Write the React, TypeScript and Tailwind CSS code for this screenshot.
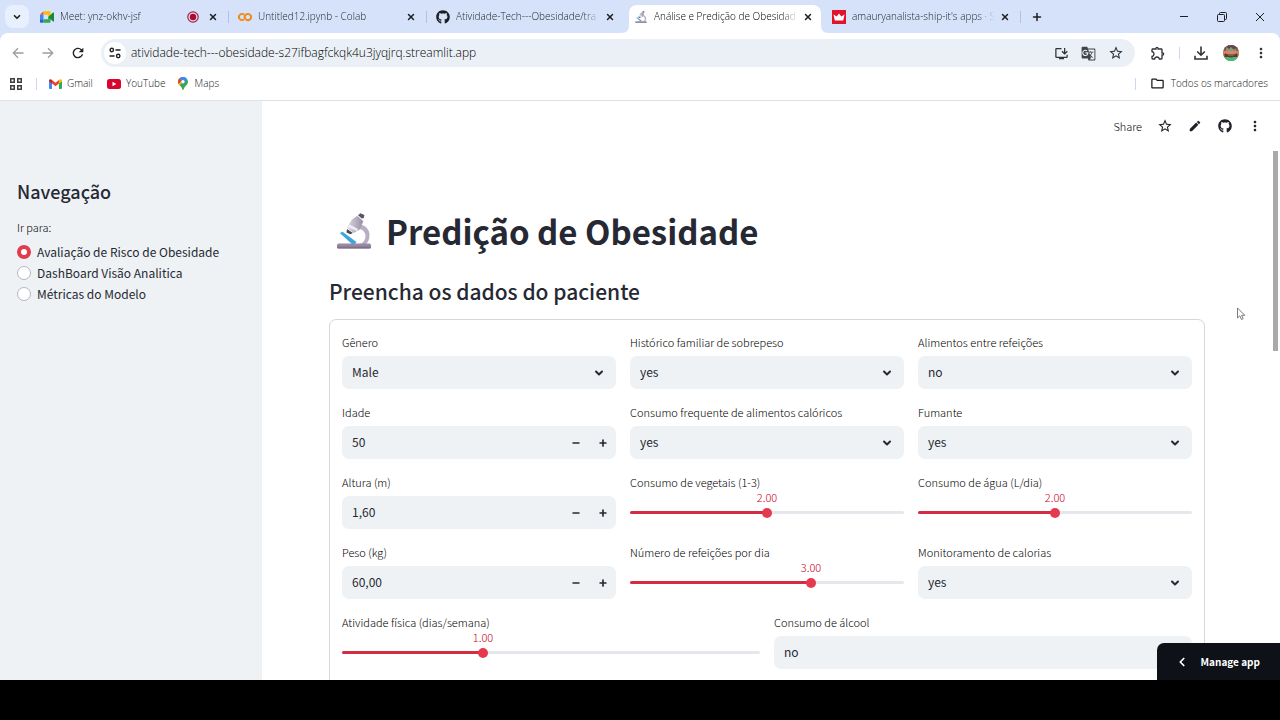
import { useState, type ReactNode } from "react";
import { ChevronDown, ChevronLeft, Minus, Plus, X } from "lucide-react";
import { FaGithub } from "react-icons/fa";
import { SiGooglecolab } from "react-icons/si";
import {
  MdEdit,
  MdGTranslate,
  MdMoreVert,
  MdOutlineExtension,
  MdOutlineFolder,
  MdOutlineInstallDesktop,
  MdRefresh,
  MdStarBorder,
} from "react-icons/md";

function MeetIcon() {
  return (
    <svg viewBox="0 0 24 20" className="h-3 w-3.5">
      <path d="M6 0v6H0z" fill="#ea4335" />
      <path d="M0 6h6v8H0z" fill="#4285f4" />
      <path d="M0 14h6v6H2a2 2 0 0 1-2-2z" fill="#1a67d6" />
      <path d="M6 0h10a2 2 0 0 1 2 2v8h-4V6H6z" fill="#fbbc04" />
      <path d="M6 14h8v-4h4v8a2 2 0 0 1-2 2H6z" fill="#34a853" />
      <path d="M14 10l8.400-7.600c.6-.5 1.600-.1 1.600.7v13.800c0 .8-1 1.200-1.600.7z" fill="#138a3e" />
    </svg>
  );
}

function MicroscopeIcon({ className }: { className: string }) {
  return (
    <svg viewBox="0 0 36 36" className={className}>
      <defs>
        <linearGradient id="tube" x1="0" x2="1">
          <stop offset="0" stopColor="#dcd8e4" />
          <stop offset="1" stopColor="#978fa3" />
        </linearGradient>
      </defs>
      <path d="M22 11c7.500 1 11.500 5 11.500 11 0 4.500-1.500 7.500-4 9.500h-6c4-1.800 6-4.500 6-8.800 0-4-3.500-7-9.500-7.700z" fill="#b6afc3" />
      <path d="M4 20.300l2.200-1.800 14.300 10.600-1.600 1.900h-3z" fill="#3fa5dc" />
      <path d="M16 6.500l5.300-3.800 6 5.500-3.500 8.300-6.300 3.600-6.500-5.300z" fill="url(#tube)" />
      <path d="M12.500 11l9.500 5-1.200 2-9.600-4z" fill="#efecf5" />
      <path d="M11 16l5.800 3.900-2.500 1.300-3.800-1.700z" fill="#4b4652" />
      <path d="M22 2.300l2.400-2 4 1.800-.6 2.800-2 .6z" fill="#5a5563" />
      <rect x="1" y="30.500" width="34" height="5" rx="1.800" fill="#998aa3" />
      <rect x="1" y="33.500" width="34" height="2" rx="1" fill="#7f718c" />
    </svg>
  );
}

function CrownIcon() {
  return (
    <svg viewBox="0 0 14 14" className="h-3.5 w-3.5">
      <path d="M0 0h14v14H0z" fill="#e0142c" />
      <path d="M1.500 4.500l3.200 2L7 3.500l2.300 3 3.200-2-1.300 6H2.800z" fill="#fff" />
    </svg>
  );
}

function RecordIcon() {
  return (
    <svg viewBox="0 0 12 12" className="h-3 w-3 shrink-0">
      <circle cx="6" cy="6" r="5.200" fill="none" stroke="#b3193b" strokeWidth="1.200" />
      <circle cx="6" cy="6" r="3.200" fill="#a50e2e" />
    </svg>
  );
}

function ArrowIcon({ className }: { className?: string }) {
  return (
    <svg viewBox="0 0 12 12" className={`h-3 w-3 ${className ?? ""}`} fill="none" stroke="#9a9da1" strokeWidth="1.300">
      <path d="M11.500 6H1.500M6 1.300L1.300 6 6 10.700" />
    </svg>
  );
}

function TuneIcon() {
  return (
    <svg viewBox="0 0 12 12" className="h-3 w-3" fill="none" stroke="#202124" strokeWidth="1.400">
      <circle cx="2.800" cy="3" r="1.700" />
      <circle cx="9.200" cy="9" r="1.700" />
      <path d="M6.500 3H11.500M.5 9h5" />
    </svg>
  );
}

function DownloadIcon() {
  return (
    <svg viewBox="0 0 14 14" className="h-3.5 w-3.5" fill="none" stroke="#303236" strokeWidth="1.600">
      <path d="M7 .5v8.500M3.200 5.500L7 9.200l3.800-3.700M1 9.800v3.200h12V9.800" />
    </svg>
  );
}

function AppsIcon() {
  return (
    <svg viewBox="0 0 12 12" className="h-3 w-3" fill="none" stroke="#3c4043" strokeWidth="1.500">
      <path d="M.75.75h3.500v3.500H.75zM7.750.75h3.500v3.500h-3.500zM.75 7.750h3.500v3.500H.75zM7.750 7.750h3.500v3.500h-3.500z" />
    </svg>
  );
}

function GmailIcon() {
  return (
    <svg viewBox="0 0 24 18" className="h-[10px] w-[13px]">
      <path d="M0 3v13.500A1.500 1.500 0 0 0 1.500 18H5.500V7.500z" fill="#4285f4" />
      <path d="M24 3v13.500a1.500 1.500 0 0 1-1.500 1.500h-4V7.500z" fill="#34a853" />
      <path d="M5.500 1.500v6.500L12 13l6.500-5V1.500L12 6.500z" fill="#ea4335" />
      <path d="M0 3.500C0 .5 3-.8 5.500 1.500V8L0 4z" fill="#c5221f" />
      <path d="M24 3.500C24 .5 21-.8 18.500 1.500V8L24 4z" fill="#fbbc04" />
    </svg>
  );
}

function YouTubeIcon() {
  return (
    <svg viewBox="0 0 14 10" className="h-[10px] w-3.5">
      <rect width="14" height="10" rx="2.500" fill="#d8062f" />
      <path d="M5.500 2.800v4.400L9.300 5z" fill="#fff" />
    </svg>
  );
}

function MapsIcon() {
  return (
    <svg viewBox="0 0 20 26" className="h-[13px] w-[10px]">
      <path d="M10 26c-1.500 0-1.500-3-3.500-6C4 16.500 0 14.500 0 9.500A10 10 0 0 1 10 0a10 10 0 0 1 10 9.500c0 5-4 7-6.500 10.500-2 3-2 6-3.500 6z" fill="#34a853" />
      <path d="M0 9.500C0 6.500 1.200 4 3 2.500L10 10 3 17C1.200 14.800 0 12.500 0 9.500z" fill="#fbbc04" />
      <path d="M3 2.500l5 4.500-6.500 7C.5 12.500 0 11 0 9.500 0 6.700 1.200 4 3 2.500z" fill="#ea4335" />
      <path d="M3 2.500A10 10 0 0 1 18.500 5L8 16.500l-1-8z" fill="#4285f4" />
      <circle cx="10" cy="9.500" r="3.300" fill="#fff" />
    </svg>
  );
}

function Avatar() {
  return (
    <svg viewBox="0 0 16 16" className="h-4 w-4">
      <defs>
        <clipPath id="round">
          <circle cx="8" cy="8" r="8" />
        </clipPath>
      </defs>
      <g clipPath="url(#round)">
        <path d="M0 0h16v16H0z" fill="#8a5a4c" />
        <path d="M0 0h16v4H0z" fill="#5b4a48" />
        <path d="M0 6h16v3H0z" fill="#d9835c" />
        <path d="M3 2l3 2 2-2 3 3 2-2v3H3z" fill="#8f957c" />
        <path d="M2 8l4 3h4l4-3v4H2z" fill="#6b3330" />
        <path d="M5 6h6l-1 3H6z" fill="#c98f6a" />
        <path d="M0 12h5l3 1 3-1h5v4H0z" fill="#3fc076" />
      </g>
    </svg>
  );
}

const tabs: { title: string; icon: ReactNode; active?: boolean; recording?: boolean }[] = [
  { title: "Meet: ynz-okhv-jsf", icon: <MeetIcon />, recording: true },
  { title: "Untitled12.ipynb - Colab", icon: <SiGooglecolab className="h-3.5 w-3.5 text-[#ee8a13]" /> },
  { title: "Atividade-Tech---Obesidade/tra", icon: <FaGithub className="h-3.5 w-3.5 text-[#1b1f24]" /> },
  { title: "Análise e Predição de Obesidad", icon: <MicroscopeIcon className="h-3 w-3.5" />, active: true },
  { title: "amauryanalista-ship-it's apps · S", icon: <CrownIcon /> },
];

function TabStrip() {
  return (
    <div className="flex h-[33px] bg-[#d5e2fa]">
      <button aria-label="Pesquisar guias" className="my-[5px] ml-[5px] mr-0.5 flex w-6 items-center justify-center rounded-lg bg-[#e9f0fd]">
        <ChevronDown className="h-2.5 w-2.5 text-[#1f1f1f]" strokeWidth={4} />
      </button>
      {tabs.map((tab, i) => (
        <div key={tab.title} className="relative flex min-w-0 basis-[198px] items-center">
          {tab.active && (
            <svg viewBox="0 0 208 28" preserveAspectRatio="none" className="absolute -left-1 bottom-0 h-7 w-[208px]" fill="#fff">
              <path d="M0 28c6 0 8-3 8-8V9c0-6 3-9 9-9h174c6 0 9 3 9 9v11c0 5 2 8 8 8z" />
            </svg>
          )}
          <div className="relative flex w-full min-w-0 items-center pl-[9px] pr-[9px]">
            <span className="flex w-3.5 shrink-0 justify-center">{tab.icon}</span>
            <span
              className={
                tab.active
                  ? "ml-1.5 min-w-0 flex-1 overflow-hidden whitespace-nowrap text-black [mask-image:linear-gradient(to_right,black_88%,transparent)]"
                  : "ml-1.5 min-w-0 flex-1 overflow-hidden whitespace-nowrap text-[#1f2226] [mask-image:linear-gradient(to_right,black_88%,transparent)]"
              }
            >
              {tab.title}
            </span>
            {tab.recording && <RecordIcon />}
            <button aria-label={`Fechar ${tab.title}`} className={tab.recording ? "ml-2 flex w-3 shrink-0 justify-center" : "ml-1 flex w-3 shrink-0 justify-center"}>
              <X className="h-2.5 w-2.5 text-[#1f1f1f]" strokeWidth={3.5} />
            </button>
          </div>
          {i !== 2 && i !== 3 && <span className="h-3 w-px shrink-0 bg-[#a9c3ee]" />}
        </div>
      ))}
      <button aria-label="Nova guia" className="flex w-8 items-center justify-center">
        <Plus className="h-3 w-3 text-[#1f1f1f]" strokeWidth={3} />
      </button>
      <div className="ml-auto flex pr-px text-[#1f1f1f]">
        <button aria-label="Minimizar" className="flex w-[38px] items-center justify-center">
          <svg viewBox="0 0 10 10" className="h-2.5 w-2.5" stroke="currentColor" fill="none">
            <path d="M1 4.500h8" />
          </svg>
        </button>
        <button aria-label="Restaurar" className="flex w-[38px] items-center justify-center">
          <svg viewBox="0 0 10 10" className="h-2.5 w-2.5" stroke="currentColor" fill="none">
            <rect x=".5" y="2.500" width="7" height="7" rx="1" />
            <path d="M2.500 2.500V1.500a1 1 0 0 1 1-1h5a1 1 0 0 1 1 1v5a1 1 0 0 1-1 1h-1" />
          </svg>
        </button>
        <button aria-label="Fechar janela" className="flex w-[38px] items-center justify-center">
          <svg viewBox="0 0 10 10" className="h-2.5 w-2.5" stroke="currentColor" fill="none">
            <path d="M1 1l8 8M9 1l-8 8" />
          </svg>
        </button>
      </div>
    </div>
  );
}

function AddressBar() {
  return (
    <div className="flex h-[38px] items-center pl-[3px] pr-1 pt-0.5">
      <button aria-label="Voltar" className="flex w-[30px] justify-center"><ArrowIcon /></button>
      <button aria-label="Avançar" className="flex w-[30px] justify-center"><ArrowIcon className="rotate-180" /></button>
      <button aria-label="Recarregar" className="flex w-[30px] justify-center">
        <MdRefresh className="h-4 w-4 text-[#202124]" />
      </button>
      <div className="ml-2 flex h-7 flex-1 items-center rounded-full bg-[#ebf0f7] pl-[3px] pr-1.5">
        <button aria-label="Informações do site" className="flex h-[22px] w-[22px] items-center justify-center rounded-full bg-white">
          <TuneIcon />
        </button>
        <input
          aria-label="Endereço"
          className="ml-[5px] min-w-0 flex-1 bg-transparent text-xs text-black outline-none"
          defaultValue="atividade-tech---obesidade-s27ifbagfckqk4u3jyqjrq.streamlit.app"
        />
        <button aria-label="Instalar" className="flex w-[27px] justify-center"><MdOutlineInstallDesktop className="h-[15px] w-[15px] text-[#303236]" /></button>
        <button aria-label="Traduzir" className="flex w-[27px] justify-center"><MdGTranslate className="h-[15px] w-[15px] text-[#404347]" /></button>
        <button aria-label="Favoritar" className="flex w-[27px] justify-center"><MdStarBorder className="h-4 w-4 text-[#303236]" /></button>
      </div>
      <button aria-label="Extensões" className="ml-2 flex w-[30px] justify-center"><MdOutlineExtension className="h-4 w-4 text-[#303236]" /></button>
      <span className="mx-1.5 h-3 w-px bg-[#c9d9f2]" />
      <button aria-label="Downloads" className="flex w-[30px] justify-center"><DownloadIcon /></button>
      <button aria-label="Perfil" className="flex w-[30px] justify-center"><Avatar /></button>
      <button aria-label="Menu" className="flex w-[30px] justify-center"><MdMoreVert className="h-4 w-4 text-[#303236]" /></button>
    </div>
  );
}

function BookmarksBar() {
  return (
    <div className="flex h-[30px] items-center border-b border-[#dfe1e5] pb-1 pl-2.5 pr-3 text-[#17191c]">
      <button aria-label="Apps"><AppsIcon /></button>
      <span className="ml-3.5 mr-3 h-3 w-px bg-[#c9d9f2]" />
      <a href="#gmail" className="flex items-center gap-[5px]"><GmailIcon />Gmail</a>
      <a href="#youtube" className="ml-3.5 flex items-center gap-[5px]"><YouTubeIcon />YouTube</a>
      <a href="#maps" className="ml-3 flex items-center gap-[7px]"><MapsIcon />Maps</a>
      <span className="ml-auto mr-3.5 h-3 w-px bg-[#c9d9f2]" />
      <button className="flex items-center gap-1.5"><MdOutlineFolder className="h-[15px] w-[15px]" />Todos os marcadores</button>
    </div>
  );
}

const pages = ["Avaliação de Risco de Obesidade", "DashBoard Visão Analitica", "Métricas do Modelo"];

function Sidebar() {
  return (
    <aside className="w-[262px] shrink-0 bg-[#eef2f5] px-[17px] pt-[78px]">
      <h2 className="text-lg font-medium leading-6">Navegação</h2>
      <fieldset className="mt-3.5">
        <legend className="mb-1 text-[11px] font-light leading-5 text-black">Ir para:</legend>
        {pages.map((page, i) => (
          <label key={page} className="flex h-[21px] items-center gap-1.5 text-xs">
            <input
              type="radio"
              name="page"
              defaultChecked={i === 0}
              className="h-3.5 w-3.5 appearance-none rounded-full border border-[#b4b7bf] bg-white checked:border-[4px] checked:border-[#e23a4e]"
            />
            {page}
          </label>
        ))}
      </fieldset>
    </aside>
  );
}

function Field({ id, label, children }: { id: string; label: string; children: ReactNode }) {
  return (
    <div className="min-w-0">
      <label htmlFor={id} className="mb-1 block text-[11px] font-light leading-5 text-black">{label}</label>
      {children}
    </div>
  );
}

function SelectField({ id, label, value }: { id: string; label: string; value: string }) {
  const options = id === "genero" ? ["Male", "Female"] : ["yes", "no"];
  return (
    <Field id={id} label={label}>
      <div className="relative">
        <select id={id} defaultValue={value} className="block h-[33px] w-full appearance-none rounded-[7px] bg-[#eef2f5] px-2.5 pb-0.5 text-xs">
          {options.map((option) => (
            <option key={option}>{option}</option>
          ))}
        </select>
        <ChevronDown className="pointer-events-none absolute right-[11px] top-[11px] h-3 w-3" strokeWidth={4} />
      </div>
    </Field>
  );
}

function NumberField({ id, label, value }: { id: string; label: string; value: string }) {
  return (
    <Field id={id} label={label}>
      <div className="flex h-[33px] items-center rounded-[7px] bg-[#eef2f5] text-xs">
        <input id={id} defaultValue={value} inputMode="decimal" className="h-full min-w-0 flex-1 bg-transparent pb-0.5 pl-2.5 outline-none" />
        <button type="button" aria-label={`Diminuir ${label}`} className="flex h-full w-[27px] items-center justify-center">
          <Minus className="h-2.5 w-2.5" strokeWidth={4} />
        </button>
        <button type="button" aria-label={`Aumentar ${label}`} className="flex h-full w-[27px] items-center justify-center">
          <Plus className="h-2.5 w-2.5" strokeWidth={4} />
        </button>
      </div>
    </Field>
  );
}

type SliderProps = { id: string; label: string; min: number; max: number; initial: number };

function SliderField({ id, label, min, max, initial }: SliderProps) {
  const [value, setValue] = useState(initial);
  const ratio = (value - min) / (max - min);
  // the thumb is 10px wide, so its centre runs from 5px to 100% - 5px
  const center = `calc(5px + (100% - 10px) * ${ratio})`;
  return (
    <Field id={id} label={label}>
      <div className="relative flex h-[33px] items-center">
        <output htmlFor={id} className="absolute -top-[7px] -translate-x-1/2 text-[11px] font-light leading-4 text-[#c80022]" style={{ left: center }}>
          {value.toFixed(2)}
        </output>
        <input
          id={id}
          type="range"
          min={min}
          max={max}
          step={0.01}
          value={value}
          onChange={(e) => setValue(Number(e.target.value))}
          className="h-[3px] w-full appearance-none rounded-full outline-none [&::-webkit-slider-thumb]:h-2.5 [&::-webkit-slider-thumb]:w-2.5 [&::-webkit-slider-thumb]:appearance-none [&::-webkit-slider-thumb]:rounded-full [&::-webkit-slider-thumb]:bg-[#e63950]"
          style={{ background: `linear-gradient(to right, #d42c42 ${center}, #e6e7ec ${center})` }}
        />
      </div>
    </Field>
  );
}

function PatientForm() {
  return (
    <form className="mt-3 rounded-[7px] border border-[#d5d7dc] p-3">
      <div className="grid grid-cols-3 gap-x-3.5 gap-y-[13px]">
        <SelectField id="genero" label="Gênero" value="Male" />
        <SelectField id="historico" label="Histórico familiar de sobrepeso" value="yes" />
        <SelectField id="lanches" label="Alimentos entre refeições" value="no" />
        <NumberField id="idade" label="Idade" value="50" />
        <SelectField id="caloricos" label="Consumo frequente de alimentos calóricos" value="yes" />
        <SelectField id="fumante" label="Fumante" value="yes" />
        <NumberField id="altura" label="Altura (m)" value="1,60" />
        <SliderField id="vegetais" label="Consumo de vegetais (1-3)" min={1} max={3} initial={2} />
        <SliderField id="agua" label="Consumo de água (L/dia)" min={1} max={3} initial={2} />
        <NumberField id="peso" label="Peso (kg)" value="60,00" />
        <SliderField id="refeicoes" label="Número de refeições por dia" min={1} max={4} initial={3} />
        <SelectField id="monitoramento" label="Monitoramento de calorias" value="yes" />
      </div>
      <div className="mt-[13px] grid grid-cols-2 gap-x-3.5 pb-20">
        <SliderField id="atividade" label="Atividade física (dias/semana)" min={0} max={3} initial={1} />
        <SelectField id="alcool" label="Consumo de álcool" value="no" />
      </div>
    </form>
  );
}

function AppToolbar() {
  return (
    <div className="flex h-[50px] items-center justify-end pr-2.5 text-[#1f2229]">
      <button className="mr-2 text-[11px] font-light text-black">Share</button>
      <button aria-label="Favoritar app" className="flex w-[30px] justify-center"><MdStarBorder className="h-4 w-4" /></button>
      <button aria-label="Editar" className="flex w-[30px] justify-center"><MdEdit className="h-3.5 w-3.5" /></button>
      <button aria-label="GitHub" className="flex w-[30px] justify-center"><FaGithub className="h-3.5 w-3.5" /></button>
      <button aria-label="Mais opções" className="flex w-[30px] justify-center"><MdMoreVert className="h-4 w-4" /></button>
    </div>
  );
}

export default function App() {
  return (
    <div className="flex h-screen flex-col bg-black">
      <header className="bg-[#d5e2fa] font-['Open_Sans',sans-serif] text-[10px] font-light">
        <TabStrip />
        <div className="rounded-t-lg bg-white">
          <AddressBar />
          <BookmarksBar />
        </div>
      </header>

      <div className="relative flex min-h-0 flex-1 overflow-hidden bg-white font-['Noto_Sans_CJK_SC',sans-serif] text-[#262933]">
        <Sidebar />
        <main className="min-w-0 flex-1">
          <AppToolbar />
          <div className="pl-[67px] pr-[75px] pt-14">
            <h1 className="flex items-center gap-3.5 pl-[7px] text-[33px] font-bold leading-12">
              <MicroscopeIcon className="h-9 w-9" />
              Predição de Obesidade
            </h1>
            <h3 className="mt-5 text-[21px] font-medium leading-8">Preencha os dados do paciente</h3>
            <PatientForm />
          </div>
        </main>

        <div className="absolute right-0.5 top-[50px] h-[200px] w-[5px] bg-[#a9a9a9]" />
        <svg viewBox="0 0 10 14" className="absolute right-[34px] top-[206px] h-3.5 w-2.5" fill="#fff" stroke="#6b6b6b" strokeWidth=".9">
          <path d="M1.500 1v10l2.300-2.200 1.700 3.700 1.700-.8L5.600 8.300h3.200z" />
        </svg>
        <button className="absolute bottom-0 right-0 flex h-[37px] items-center gap-3 rounded-tl-[7px] bg-[#0e1117] pl-[18px] pr-5 text-[10px] font-bold text-white">
          <ChevronLeft className="h-3.5 w-3.5" strokeWidth={3} />
          Manage app
        </button>
      </div>

      <div className="h-10 shrink-0" />
    </div>
  );
}
